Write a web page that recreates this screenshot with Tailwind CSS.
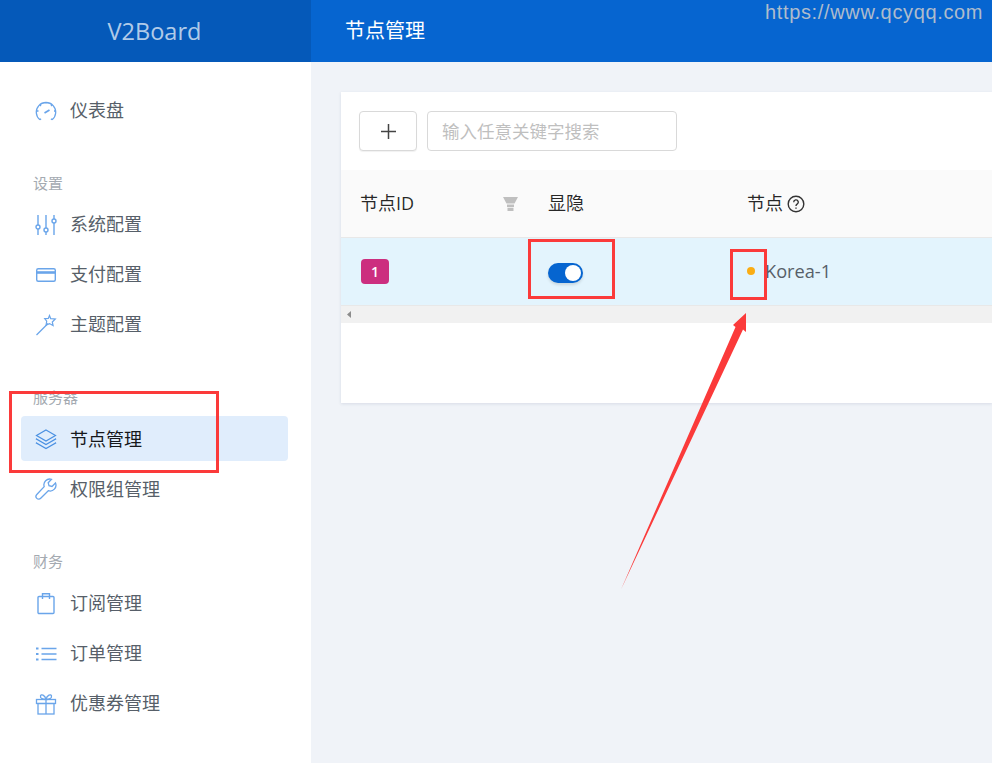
<!DOCTYPE html>
<html lang="zh-CN">
<head>
  <meta charset="UTF-8" />
  <title>V2Board</title>
  <script src="https://cdn.jsdelivr.net/npm/@tailwindcss/browser@4"></script>
</head>
<body class="relative w-[992px] h-[763px] overflow-hidden bg-[#f0f3f8] text-[18px] text-[#575f69] [font-family:'Open_Sans','Noto_Sans_CJK_SC',sans-serif]">
  <!-- header -->
  <header class="flex h-[62px]">
    <div class="flex w-[311px] items-center justify-center bg-[#0559b9] pr-[2px] pt-[2px] text-[23.5px] text-white/70">V2Board</div>
    <div class="flex flex-1 items-center bg-[#0665d0] pl-[34px] text-[20px] text-white">节点管理</div>
  </header>

  <div class="flex h-[701px]">
    <!-- sidebar -->
    <nav class="w-[311px] bg-white px-[21px] pt-[26px]">
      <a class="flex h-[45px] w-[267px] items-center gap-[13px] rounded pl-[14px]">
        <svg class="size-[22px] text-[#6aa5ea]" viewBox="0 0 22 22" fill="none" stroke="currentColor" stroke-width="1.3"><path d="M5 19.800A9.700 9.700 0 1 1 17 19.800" /><path d="M2 11h1.500M19 11h1.500M5 5l1 1M17 5l-1 1M11 2v1.500M5 19.800l1-1M17 19.800l-1-1" /><path d="M9.500 13l5-3" stroke-width="1.800" /></svg>
        <span>仪表盘</span>
      </a>
      <div class="flex h-[69px] items-end pb-[8px] pl-[12px] text-[15px] text-[#a4aab1]">设置</div>
      <div class="flex flex-col gap-[5px]">
        <a class="flex h-[45px] w-[267px] items-center gap-[13px] rounded pl-[14px]">
          <svg class="size-[22px] text-[#6aa5ea]" viewBox="0 0 22 22" fill="none" stroke="currentColor" stroke-width="1.400"><path d="M3 1v10M3 15v6M11 1v13M11 18v3M19 1v4M19 9v12" /><circle cx="3" cy="13" r="2" /><circle cx="11" cy="16" r="2" /><circle cx="19" cy="7" r="2" /></svg>
          <span>系统配置</span>
        </a>
        <a class="flex h-[45px] w-[267px] items-center gap-[13px] rounded pl-[14px]">
          <svg class="size-[22px] text-[#6aa5ea]" viewBox="0 0 22 22" fill="none" stroke="currentColor" stroke-width="1.400"><rect x="1.700" y="4.700" width="18.600" height="12.600" rx="1.500" /><path d="M2 8.500h18" stroke-width="2.600" /></svg>
          <span>支付配置</span>
        </a>
        <a class="flex h-[45px] w-[267px] items-center gap-[13px] rounded pl-[14px]">
          <svg class="size-[22px] text-[#6aa5ea]" viewBox="0 0 22 22" fill="none" stroke="currentColor" stroke-width="1.200"><path d="M1.500 21L13 9.500" /><path d="M14.500 1.500l1.200 3.200 4.600.3-3 3 .8 3.600-3.600-2-3.400 1.400.6-3.800-2-2.600 3.600-.2z" /></svg>
          <span>主题配置</span>
        </a>
      </div>
      <div class="flex h-[69px] items-end pb-[8px] pl-[12px] text-[15px] text-[#a4aab1]">服务器</div>
      <div class="flex flex-col gap-[5px]">
        <a class="flex h-[45px] w-[267px] items-center gap-[13px] rounded bg-[#e0edfc] pl-[14px] text-[#16181b]">
          <svg class="size-[22px] text-[#4a90e2]" viewBox="0 0 22 22" fill="none" stroke="currentColor" stroke-width="1.200"><path d="M11 2l9.500 5.500L11 13 1.500 7.500z" /><path d="M2 10.500l-.5.5L11 16.500l9.500-5.500-.5-.5" /><path d="M2 14.500l-.5.5L11 20.500l9.500-5.500-.5-.5" /></svg>
          <span class="pt-[2px]">节点管理</span>
        </a>
        <a class="flex h-[45px] w-[267px] items-center gap-[13px] rounded pl-[14px]">
          <svg class="size-[22px] text-[#6aa5ea]" viewBox="0 0 22 22" fill="none" stroke="currentColor" stroke-width="1.300"><path d="M20.500 5l-3.500 3.500-3-.8-.8-3L16.500 1.300a5.800 5.800 0 0 0-7.300 7.300L1.800 16.500a2.700 2.700 0 0 0 3.900 3.800l7.600-7.600A5.800 5.800 0 0 0 20.500 5z" /></svg>
          <span class="pt-[2px]">权限组管理</span>
        </a>
      </div>
      <div class="flex h-[70px] items-end pb-[9px] pl-[12px] text-[15px] text-[#a4aab1]">财务</div>
      <div class="flex flex-col gap-[5px]">
        <a class="flex h-[45px] w-[267px] items-center gap-[13px] rounded pl-[14px]">
          <svg class="size-[22px] text-[#6aa5ea]" viewBox="0 0 22 22" fill="none" stroke="currentColor" stroke-width="1.400"><rect x="3" y="3.500" width="16" height="17" rx="1" /><path d="M7.500 6V.8h7V6" /></svg>
          <span>订阅管理</span>
        </a>
        <a class="flex h-[45px] w-[267px] items-center gap-[13px] rounded pl-[14px]">
          <svg class="size-[22px] text-[#6aa5ea]" viewBox="0 0 22 22" fill="none" stroke="currentColor" stroke-width="1.300"><path d="M6.500 5.500h15M6.500 11h15M6.500 16.500h15" /><path d="M1 5.500h2.500M1 11h2.500M1 16.500h2.500" stroke-width="2.200" /></svg>
          <span>订单管理</span>
        </a>
        <a class="flex h-[45px] w-[267px] items-center gap-[13px] rounded pl-[14px]">
          <svg class="size-[22px] text-[#6aa5ea]" viewBox="0 0 22 22" fill="none" stroke="currentColor" stroke-width="1.300"><rect x="1.500" y="6.500" width="19" height="4" /><rect x="3" y="10.500" width="16" height="10.500" /><path d="M11 6.500V21M11 6.500C8 6.500 5 5.500 5.500 3S10 2 11 6.500C12 2 16 .5 16.500 3S14 6.500 11 6.500z" /></svg>
          <span>优惠券管理</span>
        </a>
      </div>
    </nav>

    <!-- content -->
    <main class="flex-1 pl-[30px] pt-[30px]">
      <section class="h-[311px] bg-white shadow-[0_1px_3px_rgba(40,60,110,0.12)]">
        <div class="flex h-[78px] items-center gap-[10px] pl-[18px]">
          <button class="flex h-[40px] w-[58px] items-center justify-center rounded border border-[#d9d9d9] bg-white shadow-[0_1px_1px_rgba(0,0,0,0.06)]">
            <svg class="size-[15px] text-[#444]" viewBox="0 0 15 15" fill="none" stroke="currentColor" stroke-width="1.500"><path d="M7.500 0v15M0 7.500h15" /></svg>
          </button>
          <div class="flex h-[40px] w-[250px] items-center rounded border border-[#d9d9d9] pl-[14px] text-[17.5px] text-[#bfbfbf]">输入任意关键字搜索</div>
        </div>

        <div class="flex h-[68px] items-center border-b border-[#e8e8e8] bg-[#fafafa] text-[18px] text-[rgba(0,0,0,0.85)]">
          <div class="flex w-[207px] items-center justify-between pl-[19px] pr-[30px]">
            <span>节点ID</span>
            <svg class="h-[14px] w-[15px] text-[#bfbfbf]" viewBox="0 0 15 14" fill="currentColor"><path d="M0 0h15l-3.500 6.500h-8z" /><path d="M4 7.500h7V10H4zM4.500 10.800h6V14h-6z" /></svg>
          </div>
          <div class="w-[199px]">显隐</div>
          <div class="flex items-center gap-[4px]">
            <span>节点</span>
            <svg class="size-[18px] text-[#333]" viewBox="0 0 18 18" fill="none" stroke="currentColor" stroke-width="1.400"><circle cx="9" cy="9" r="7.800" /><path d="M6.700 7.200a2.300 2.300 0 1 1 3.400 2c-.8.500-1.100.9-1.100 1.800" /><path d="M9 12.500v1.300" /></svg>
          </div>
        </div>

        <div class="flex h-[68px] items-center border-b border-[#e8e8e8] bg-[#e3f4fd]">
          <div class="w-[207px] pl-[20px]">
            <span class="flex h-[25px] w-[28px] items-center justify-center rounded bg-[#cc2e7f] text-[14px] font-semibold text-white">1</span>
          </div>
          <div class="w-[199px] pt-[2px]">
            <span class="flex h-[20px] w-[35px] items-center justify-end rounded-full bg-[#0665d0] pr-[2px] shadow-[0_2px_3px_rgba(0,0,0,0.12)]">
              <span class="size-[16px] rounded-full bg-white"></span>
            </span>
          </div>
          <div class="flex items-center gap-[10px]">
            <span class="size-[8px] rounded-full bg-[#faad14]"></span>
            <span class="text-[18.200px]">Korea-1</span>
          </div>
        </div>

        <div class="flex h-[17px] items-center bg-[#f1f1f1] pl-[6px]">
          <svg class="h-[7px] w-[4px] text-[#8c8c8c]" viewBox="0 0 4 7" fill="currentColor"><path d="M4 0v7L0 3.500z" /></svg>
        </div>
      </section>
    </main>
  </div>

  <!-- screenshot annotations -->
  <div class="absolute left-[765px] top-[0px] text-[20px] leading-[24px] tracking-[0.65px] text-[#aebccc] [font-family:'Liberation_Sans',sans-serif]">https://www.qcyqq.com</div>
  <div class="absolute left-[9px] top-[391px] h-[82px] w-[210px] border-[3px] border-[#fb3a3a]"></div>
  <div class="absolute left-[528px] top-[239px] h-[60px] w-[87px] border-[3px] border-[#fb3a3a]"></div>
  <div class="absolute left-[730px] top-[249px] h-[51px] w-[37px] border-[3px] border-[#fb3a3a]"></div>
  <svg class="absolute left-[0px] top-[0px]" width="992" height="763" viewBox="0 0 992 763" fill="#fb3a3a"><polygon points="746,313 733,325 735.500,327 621,589.500 743,329.500 746,332" /></svg>
</body>
</html>
